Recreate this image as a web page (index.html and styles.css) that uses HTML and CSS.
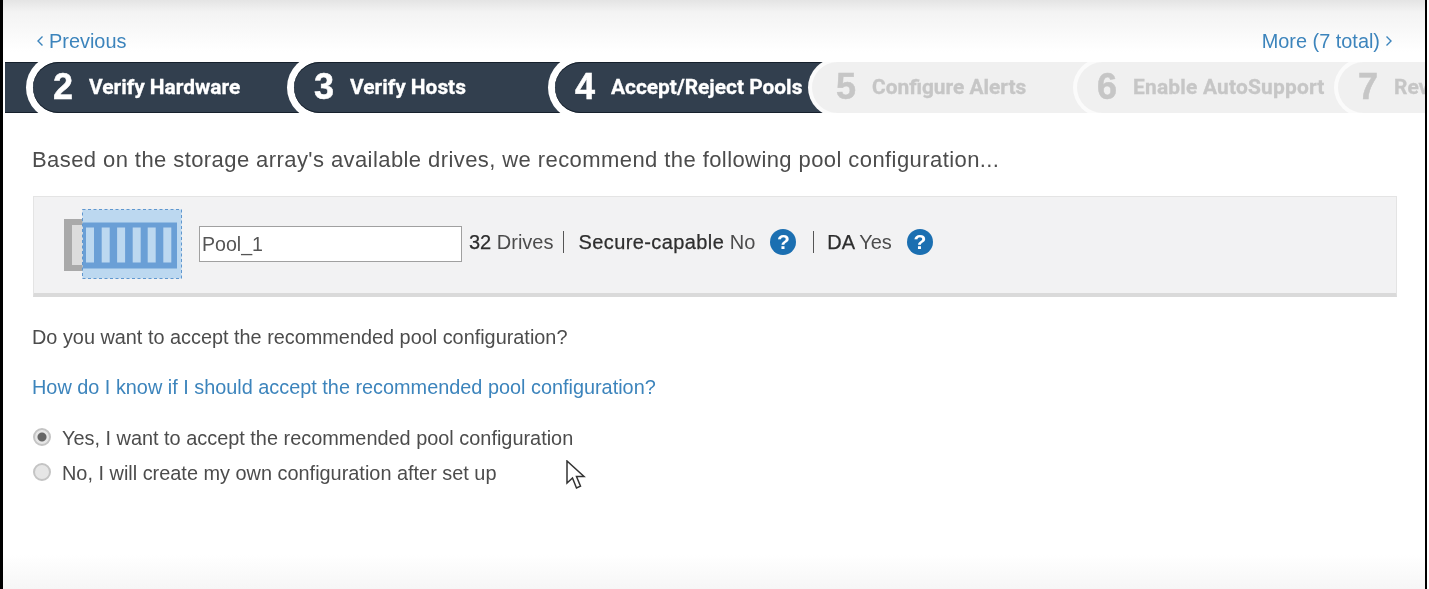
FILE: index.html
```html
<!DOCTYPE html>
<html lang="en">
<head>
<meta charset="utf-8">
<title>Setup wizard</title>
<link rel="stylesheet" href="styles.css">
</head>
<body>
<main class="frame">
  <nav class="pager">
    <a class="link" href="#"><svg class="chev" viewBox="0 0 8 14"><path d="M6.500 2.500 2 7l4.500 4.500"/></svg>Previous</a>
    <a class="link" href="#">More (7 total)<svg class="chev chev-r" viewBox="0 0 8 14"><path d="M1.500 2.500 6 7l-4.500 4.500"/></svg></a>
  </nav>
  <ol class="steps">
    <li class="step done"><b class="num">2</b><span class="label">Verify Hardware</span></li>
    <li class="step done"><b class="num">3</b><span class="label">Verify Hosts</span></li>
    <li class="step done"><b class="num">4</b><span class="label">Accept/Reject Pools</span></li>
    <li class="step s5"><b class="num">5</b><span class="label">Configure Alerts</span></li>
    <li class="step"><b class="num">6</b><span class="label wide-label">Enable AutoSupport</span></li>
    <li class="step"><b class="num">7</b><span class="label">Review</span></li>
  </ol>
  <section class="content">
    <p class="lead">Based on the storage array's available drives, we recommend the following pool configuration...</p>
    <div class="panel">
      <svg class="tray" viewBox="0 0 118 70" aria-hidden="true">
        <rect x="0" y="10" width="30" height="52" fill="#a9a9a9"/>
        <rect x="8" y="16" width="22" height="40" fill="#dcdcdc"/>
        <rect x="18.500" y="0.500" width="99" height="69" fill="#bcd8f0" stroke="#5f97cf" stroke-dasharray="3 2.500"/>
        <rect x="19" y="13.500" width="94" height="46" fill="#6a9fd6"/>
        <g fill="#bcd8f0">
          <rect x="22" y="18.500" width="8" height="35"/><rect x="37.700" y="18.500" width="8" height="35"/>
          <rect x="53.100" y="18.500" width="8" height="35"/><rect x="68.700" y="18.500" width="8" height="35"/>
          <rect x="83.700" y="18.500" width="8" height="35"/><rect x="99.300" y="18.500" width="8" height="35"/>
        </g>
      </svg>
      <input class="name" type="text" value="Pool_1" aria-label="Pool name">
      <span class="meta"><span class="strong">32</span> Drives</span>
      <span class="sep"></span>
      <span class="meta"><span class="strong wide">Secure-capable</span> No</span>
      <span class="help">?</span>
      <span class="sep sep2"></span>
      <span class="meta"><span class="strong">DA</span> Yes</span>
      <span class="help">?</span>
    </div>
    <p class="question">Do you want to accept the recommended pool configuration?</p>
    <p class="how"><a class="link" href="#">How do I know if I should accept the recommended pool configuration?</a></p>
    <label class="choice"><input type="radio" name="accept" checked><span>Yes, I want to accept the recommended pool configuration</span></label>
    <label class="choice"><input type="radio" name="accept"><span>No, I will create my own configuration after set up</span></label>
  </section>
  <svg class="pointer" viewBox="0 0 20 30" aria-hidden="true"><path d="M1 1v22l5.500-5 4 10 4-1.800-4-9.700h7.500z"/></svg>
</main>
</body>
</html>
```
FILE: styles.css
```css
* { box-sizing: border-box; }
html, body { margin: 0; height: 100%; }
body {
  background: linear-gradient(to right, #000 calc(100% - 2px), #fff 0);
  overflow: hidden;
  font-family: "Liberation Sans", Arial, sans-serif;
  color: #4c4c4c;
}
.frame {
  position: relative;
  height: 589px;
  margin: 0 4px 0 3px;
  background: linear-gradient(#e4e4e4 0, #f3f3f3 12px, #fff 52px, #fff 555px, #f6f6f6 589px);
  filter: blur(.4px);
}
.link { color: #3c84bc; text-decoration: none; }
.pager {
  display: flex;
  justify-content: space-between;
  align-items: center;
  height: 62px;
  padding: 20px 32px 0 32px;
  font-size: 19.900px;
}
.pager .link { display: inline-flex; align-items: center; }
.chev { width: 8px; height: 14px; margin: 0 5px 0 1px; fill: none; stroke: #3c84bc; stroke-width: 1.400; }
.chev-r { margin: 0 0 0 5px; }
.steps {
  display: flex;
  list-style: none;
  height: 51px;
  margin: 0 0 0 2px;
  padding: 0 0 0 28px;
  background: #323f4e;
  overflow: hidden;
  box-shadow: inset 0 1px #16202c, inset 0 -1px #16202c;
}
.step {
  flex: none;
  display: flex;
  align-items: center;
  width: 291px;
  height: 51px;
  margin-right: -30px;
  padding: 0 0 2px 20px;
  border-radius: 26px 0 0 26px;
  white-space: nowrap;
  background: #f0f0f0;
  color: #c6c6c6;
  box-shadow: 0 0 0 4px #fbfbfb;
}
.step.done {
  background: #323f4e;
  color: #fff;
  box-shadow: inset 0 1px #16202c, inset 0 -1px #16202c, 0 0 0 7px #fff;
}
.step.s5 { margin: 0 -26px 0 -4px; padding-left: 24px; }
.num {
  width: 36px;
  font-size: 36px;
  line-height: 1;
  font-weight: 700;
  -webkit-text-stroke: .5px currentColor;
}
.label {
  font-family: Roboto, "Liberation Sans", sans-serif;
  font-size: 20.900px;
  font-weight: 700;
  -webkit-text-stroke: .3px currentColor;
}
.wide-label { letter-spacing: .22px; }
.content { padding: 0 25px 0 29px; }
.lead { margin: 34px 0 0; font-size: 22px; line-height: 26px; letter-spacing: .42px; }
.panel {
  display: flex;
  align-items: center;
  height: 101px;
  margin: 23px 3px 0 1px;
  padding: 0 0 2px 30px;
  background: #f2f2f3;
  border: 1px solid #e4e4e4;
  border-bottom: 4px solid #dadada;
  font-size: 20px;
}
.tray { flex: none; width: 118px; height: 70px; margin-right: 17px; }
.name {
  width: 263px;
  height: 36px;
  margin: 0 7px 0 0;
  padding: 0 2px;
  border: 1px solid #a0a0a0;
  border-radius: 0;
  background: #fff;
  color: #555;
  font: 19.600px "Liberation Sans", Arial, sans-serif;
}
.meta { margin-bottom: 4px; }
.strong { color: #2e2e2e; -webkit-text-stroke: .25px #2e2e2e; }
.wide { letter-spacing: .4px; }
.sep { width: 1px; height: 22px; margin: 0 14px 4px 10px; background: #555; }
.sep2 { margin: 0 13px 4px 17px; }
.help {
  flex: none;
  width: 26px;
  height: 26px;
  margin: 0 0 4px 15px;
  border-radius: 50%;
  background: #1b6fb1;
  color: #fff;
  font-size: 21px;
  font-weight: 700;
  line-height: 26px;
  text-align: center;
}
.question { margin: 28px 0 0; font-size: 19.870px; line-height: 24px; }
.how { margin: 26px 0 0; font-size: 19.870px; line-height: 24px; }
.choice {
  display: flex;
  align-items: center;
  gap: 11px;
  height: 35px;
  font-size: 19.900px;
}
.choice span { margin-top: 2px; }
.how + .choice { margin-top: 21px; }
.choice input {
  appearance: none;
  width: 18px;
  height: 18px;
  margin: 0 0 2px 1px;
  border: 2px solid #c4c4c4;
  border-radius: 50%;
  background: #e6e6e6;
}
.choice input:checked { background: radial-gradient(circle, #666 0 4px, #e6e6e6 5px); }
.pointer {
  position: absolute;
  left: 563px;
  top: 460px;
  width: 20px;
  height: 30px;
  fill: #fff;
  stroke: #333;
  stroke-width: 1.500;
}
```
